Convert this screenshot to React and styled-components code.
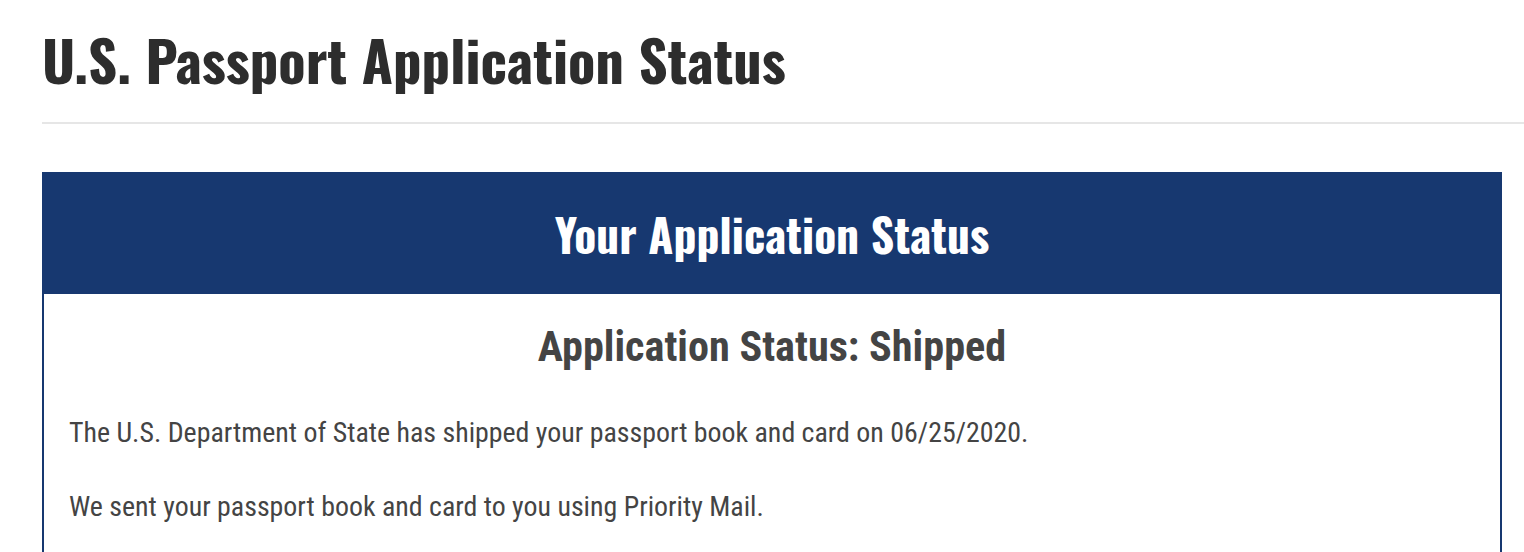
import React from "react";
import styled, { createGlobalStyle } from "styled-components";

const GlobalStyle = createGlobalStyle`
  html, body { margin: 0; padding: 0; background: #ffffff; }
  body { font-family: "Roboto Condensed", Roboto, "Liberation Sans", sans-serif; color: #444444; }
  * { box-sizing: border-box; }
`;

const Page = styled.main`
  display: flex;
  flex-direction: column;
  padding-left: 42px;
`;

const PageHeader = styled.header`
  padding: 24px 0 30px;
  border-bottom: 2px solid #e6e6e6;
`;

const PageTitle = styled.h1`
  margin: 0;
  font-family: "Oswald", "Roboto Condensed", sans-serif;
  font-weight: 700;
  font-size: 56.6px;
  line-height: 68px;
  color: #2d2d2d;
`;

const StatusCard = styled.section`
  margin: 48px 22px 0 0;
  border: 2px solid #173870;
  border-bottom: none;
  display: flex;
  flex-direction: column;
`;

const CardHeader = styled.div`
  height: 120px;
  background: #173870;
  display: flex;
  align-items: center;
  justify-content: center;
`;

const CardTitle = styled.h2`
  margin: 0;
  font-family: "Oswald", "Roboto Condensed", sans-serif;
  font-weight: 700;
  font-size: 45.5px;
  line-height: 1;
  color: #ffffff;
`;

const CardBody = styled.div`
  padding: 29px 25px 0;
`;

const StatusHeading = styled.h3`
  margin: 0 0 41px;
  text-align: center;
  font-family: "Roboto Condensed", Roboto, sans-serif;
  font-weight: 700;
  font-size: 42.2px;
  line-height: 48px;
  color: #444444;
`;

const Paragraph = styled.p`
  margin: 0 0 32px;
  font-family: "Roboto Condensed", Roboto, sans-serif;
  font-weight: 400;
  font-size: 27.9px;
  line-height: 42px;
  color: #444444;
`;

export default function App() {
  return (
    <>
      <GlobalStyle />
      <Page>
        <PageHeader>
          <PageTitle>U.S. Passport Application Status</PageTitle>
        </PageHeader>
        <StatusCard>
          <CardHeader>
            <CardTitle>Your Application Status</CardTitle>
          </CardHeader>
          <CardBody>
            <StatusHeading>Application Status: Shipped</StatusHeading>
            <Paragraph>
              The U.S. Department of State has shipped your passport book and card on 06/25/2020.
            </Paragraph>
            <Paragraph>
              We sent your passport book and card to you using Priority Mail.
            </Paragraph>
          </CardBody>
        </StatusCard>
      </Page>
    </>
  );
}
